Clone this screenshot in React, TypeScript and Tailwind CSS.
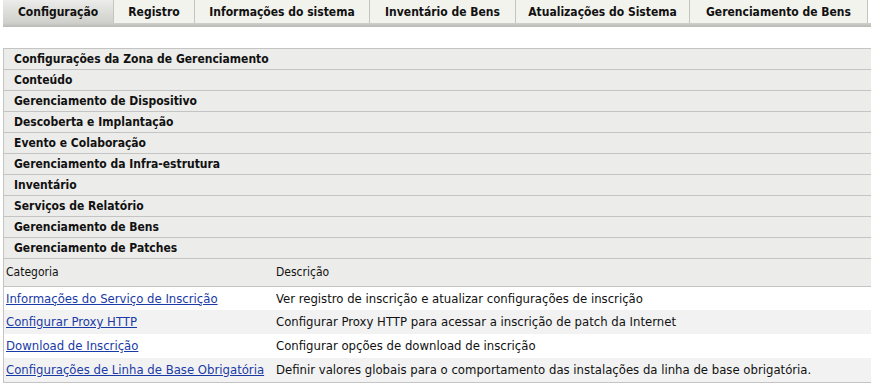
const tabs = [
  "Configuração",
  "Registro",
  "Informações do sistema",
  "Inventário de Bens",
  "Atualizações do Sistema",
  "Gerenciamento de Bens",
];

const tabWidths = ["w-[111px]", "w-[81px]", "w-[175px]", "w-[146px]", "w-[174px]", "w-[178px]"];

const sections = [
  "Configurações da Zona de Gerenciamento",
  "Conteúdo",
  "Gerenciamento de Dispositivo",
  "Descoberta e Implantação",
  "Evento e Colaboração",
  "Gerenciamento da Infra-estrutura",
  "Inventário",
  "Serviços de Relatório",
  "Gerenciamento de Bens",
  "Gerenciamento de Patches",
];

const rows = [
  {
    cat: "Informações do Serviço de Inscrição",
    desc: "Ver registro de inscrição e atualizar configurações de inscrição",
  },
  {
    cat: "Configurar Proxy HTTP",
    desc: "Configurar Proxy HTTP para acessar a inscrição de patch da Internet",
  },
  {
    cat: "Download de Inscrição",
    desc: "Configurar opções de download de inscrição",
  },
  {
    cat: "Configurações de Linha de Base Obrigatória",
    desc: "Definir valores globais para o comportamento das instalações da linha de base obrigatória.",
  },
];

export default function App() {
  return (
    <div
      className="h-[383px] w-[871px] overflow-hidden bg-white text-[#111]"
      style={{ fontFamily: '"DejaVu Sans Condensed", "DejaVu Sans", sans-serif' }}
    >
      {/* tab strip */}
      <div className="pl-[3px]">
        <div className="flex h-[23px]">
          {tabs.map((t, i) => (
            <div
              key={t}
              className={`${tabWidths[i]} flex items-center justify-center border-r border-[#c4c4c0] text-[12px] font-bold ${
                i === 0
                  ? "bg-gradient-to-b from-[#ececea] to-[#cfcfcb]"
                  : "bg-[#f3f3ee]"
              }`}
            >
              {t}
            </div>
          ))}
        </div>
        <div className="h-[4px] bg-gradient-to-b from-[#cfcfcb] to-[#b9b9b4]" />
      </div>

      {/* accordion panel */}
      <div className="mt-[21px] ml-[3px] border-t border-l border-[#c4c4c4]">
        {sections.map((s) => (
          <div
            key={s}
            className="flex h-[21px] items-center border-b border-[#c4c4c4] bg-[#ececea] pl-[10px] text-[12px] font-bold"
          >
            {s}
          </div>
        ))}

        <table className="w-full border-collapse text-[13px]">
          <thead>
            <tr className="h-[27px] border-b border-[#c4c4c4] bg-[#ececea] text-[12px]">
              <th className="w-[270px] pl-[2px] text-left font-normal">Categoria</th>
              <th className="pl-[2px] text-left font-normal">Descrição</th>
            </tr>
          </thead>
          <tbody>
            {rows.map((r, i) => (
              <tr
                key={r.cat}
                className={`h-[24px] ${i % 2 ? "bg-[#f2f2f2]" : "bg-white"} ${
                  i === rows.length - 1 ? "border-b border-[#c4c4c4]" : ""
                }`}
              >
                <td className="pl-[2px]">
                  <a href="#" className="text-[#1a3aa6] underline">
                    {r.cat}
                  </a>
                </td>
                <td className="pl-[2px]">{r.desc}</td>
              </tr>
            ))}
          </tbody>
        </table>
      </div>
    </div>
  );
}
